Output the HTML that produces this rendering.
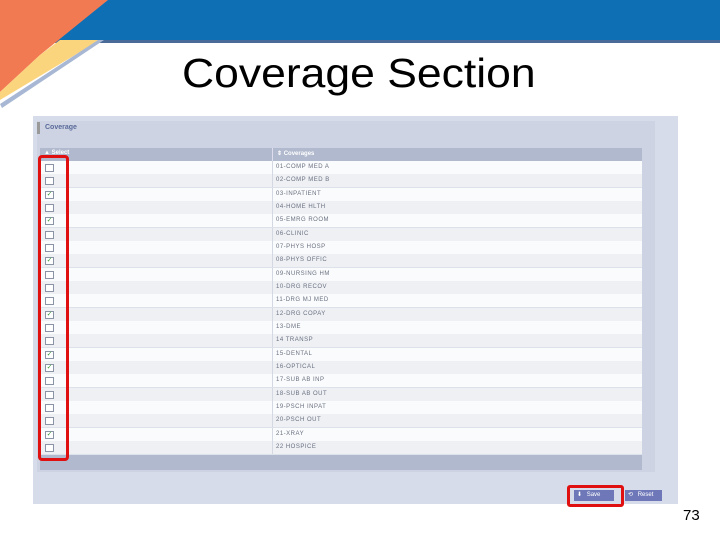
<!DOCTYPE html><html><head><style>
body{margin:0;width:720px;height:540px;background:#fff;position:relative;overflow:hidden;font-family:"Liberation Sans",sans-serif}
.a{position:absolute}
.row{position:absolute;left:40px;width:602px;height:13px;border-bottom:1px solid #dde1ea}
.row .c{position:absolute;left:232px;top:0;height:13px;border-left:1px solid #d3d8e2}
.row span{position:absolute;left:3px;top:3px;font-size:6px;color:#6a7080;letter-spacing:.5px;white-space:nowrap}
.cb{position:absolute;left:5px;top:3px;width:7px;height:6px;border:1px solid #8a94a6;background:#fff;font-size:7px;line-height:6px;color:#3a9a3a;text-align:center}
.btn{position:absolute;top:490px;height:11px;background:#6e78b8;color:#fff;font-size:6px;line-height:11px}
</style></head><body>
<div class="a" style="left:0;top:0;width:720px;height:40px;background:#0e6fb5"></div>
<div class="a" style="left:0;top:40px;width:720px;height:3px;background:#4a6a98"></div>
<svg class="a" style="left:0;top:0" width="110" height="110"><polygon points="0,0 108,0 40,55 0,92" fill="#f27a52"/><polygon points="60,40 100,40 0,100 0,92 40,55" fill="#fbd57e"/><polygon points="98,40 104,40 2,108 0,104" fill="#a8b8d4"/></svg>
<div class="a" style="left:182px;top:50px;font-size:41px;color:#000;transform:scaleX(1.085);transform-origin:0 0;white-space:nowrap">Coverage Section</div>
<div class="a" style="left:33px;top:116px;width:645px;height:388px;background:#d7dceb"></div>
<div class="a" style="left:37px;top:121px;width:618px;height:351px;background:#cdd3e3"></div>
<div class="a" style="left:37px;top:122px;width:3px;height:12px;background:#999"></div>
<div class="a" style="left:45px;top:124px;font-size:7px;color:#5a6a9a;font-weight:bold">Coverage</div>
<div class="a" style="left:40px;top:148px;width:602px;height:13px;background:#b0b9cd"></div>
<div class="a" style="left:44px;top:150px;font-size:6px;color:#fff;font-weight:bold">▲ Select</div>
<div class="a" style="left:272px;top:148px;width:1px;height:13px;background:#dde"></div>
<div class="a" style="left:277px;top:150px;font-size:6px;color:#fff;font-weight:bold">⇕ Coverages</div>
<div id="rows"></div>
<div class="a" style="left:40px;top:455px;width:602px;height:15px;background:#b0b9cd"></div>
<div class="btn" style="left:574px;width:40px"><span style="padding:0 3px">⬇</span> Save</div>
<div class="btn" style="left:625px;width:37px"><span style="padding:0 3px">⟲</span> Reset</div>
<div class="a" style="left:567px;top:485px;width:51px;height:16px;border:3px solid #e01010;border-radius:3px"></div>
<div class="a" style="left:38px;top:155px;width:25px;height:300px;border:3px solid #e01010;border-radius:4px"></div>
<div class="a" style="left:683px;top:507px;font-size:15px;color:#000">73</div>
<script>
var n=["01-COMP MED A","02-COMP MED B","03-INPATIENT","04-HOME HLTH","05-EMRG ROOM","06-CLINIC","07-PHYS HOSP","08-PHYS OFFIC","09-NURSING HM","10-DRG RECOV","11-DRG MJ MED","12-DRG COPAY","13-DME","14 TRANSP","15-DENTAL","16-OPTICAL","17-SUB AB INP","18-SUB AB OUT","19-PSCH INPAT","20-PSCH OUT","21-XRAY","22 HOSPICE"];
var ch=[2,4,7,11,14,15,20],h="";
n.forEach(function(t,i){h+='<div class="row" style="top:'+Math.round(161+i*13.33)+'px;background:'+(i%2?'#eef0f4':'#fafbfc')+'"><div class="cb">'+(ch.indexOf(i)>=0?'✓':'')+'</div><div class="c"><span>'+t+'</span></div></div>'});
document.getElementById('rows').innerHTML=h;
</script>
</body></html>
